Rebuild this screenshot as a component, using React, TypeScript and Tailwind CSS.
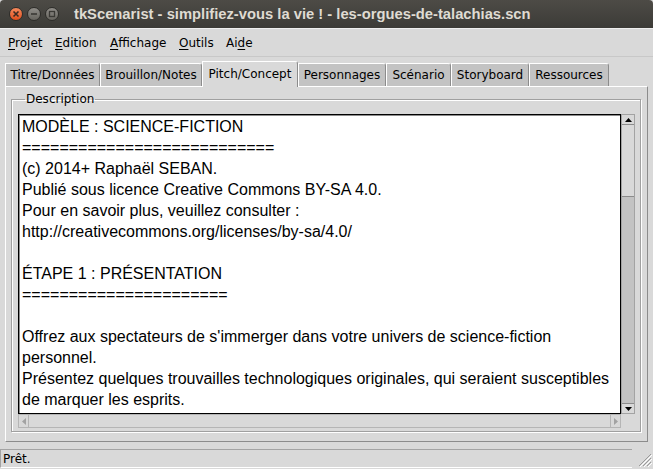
import React from 'react'

const menus = [
  { label: 'Projet', u: 0, w: 'w-[47px]' },
  { label: 'Edition', u: 0, w: 'w-[55px]' },
  { label: 'Affichage', u: 0, w: 'w-[69px]' },
  { label: 'Outils', u: 0, w: 'w-[47px]' },
  { label: 'Aide', u: 2, w: 'w-[40px]' },
]

const tabs = [
  { label: 'Titre/Données', w: 'w-[95px]' },
  { label: 'Brouillon/Notes', w: 'w-[102px]' },
  { label: 'Pitch/Concept', w: 'w-[96px]', active: true },
  { label: 'Personnages', w: 'w-[88px]' },
  { label: 'Scénario', w: 'w-[65px]' },
  { label: 'Storyboard', w: 'w-[78px]' },
  { label: 'Ressources', w: 'w-[80px]' },
]

const lines = [
  'MODÈLE : SCIENCE-FICTION',
  '===========================',
  '(c) 2014+ Raphaël SEBAN.',
  'Publié sous licence Creative Commons BY-SA 4.0.',
  'Pour en savoir plus, veuillez consulter :',
  'http://creativecommons.org/licenses/by-sa/4.0/',
  '',
  'ÉTAPE 1 : PRÉSENTATION',
  '======================',
  '',
  "Offrez aux spectateurs de s'immerger dans votre univers de science-fiction",
  'personnel.',
  'Présentez quelques trouvailles technologiques originales, qui seraient susceptibles',
  'de marquer les esprits.',
]

function Underlined ({ text, at }: { text: string, at: number }): React.ReactElement {
  return (
    <span>
      {text.slice(0, at)}
      <span className="underline underline-offset-[2px]">{text[at]}</span>
      {text.slice(at + 1)}
    </span>
  )
}

function WindowButtons (): React.ReactElement {
  return (
    <div className="flex items-center gap-[4px] pl-[9px]">
      <div className="w-[14px] h-[14px] rounded-full bg-gradient-to-b from-[#f58a5c] to-[#e04d18] border border-[#2e2d2a] flex items-center justify-center">
        <svg width="8" height="8" viewBox="0 0 8 8"><path d="M1.5 1.5 L6.5 6.5 M6.5 1.5 L1.5 6.5" stroke="#3a2a22" strokeWidth="1.6" /></svg>
      </div>
      <div className="w-[14px] h-[14px] rounded-full bg-gradient-to-b from-[#8f8d88] to-[#67655f] border border-[#2e2d2a] flex items-center justify-center">
        <svg width="8" height="8" viewBox="0 0 8 8"><path d="M1 4 L7 4" stroke="#3a3935" strokeWidth="1.6" /></svg>
      </div>
      <div className="w-[14px] h-[14px] rounded-full bg-gradient-to-b from-[#8f8d88] to-[#67655f] border border-[#2e2d2a] flex items-center justify-center">
        <svg width="8" height="8" viewBox="0 0 8 8"><rect x="1.5" y="1.5" width="5" height="5" fill="none" stroke="#3a3935" strokeWidth="1.3" /></svg>
      </div>
    </div>
  )
}

function Arrow ({ dir, color }: { dir: 'up' | 'down' | 'left' | 'right', color: string }): React.ReactElement {
  const d = {
    up: 'M0 4 L3.5 0 L7 4 Z',
    down: 'M0 0 L7 0 L3.5 4 Z',
    left: 'M4 0 L4 7 L0 3.5 Z',
    right: 'M0 0 L4 3.5 L0 7 Z',
  }[dir]
  const vertical = dir === 'up' || dir === 'down'
  return (
    <svg width={vertical ? 7 : 4} height={vertical ? 4 : 7} viewBox={vertical ? '0 0 7 4' : '0 0 4 7'}>
      <path d={d} fill={color} />
    </svg>
  )
}

export default function App (): React.ReactElement {
  return (
    <div className="w-[653px] h-[469px] bg-[#d9d9d9] flex flex-col overflow-hidden font-['DejaVu_Sans',sans-serif] text-[12px] text-black">
      {/* title bar */}
      <div className="h-[28px] shrink-0 flex items-center bg-gradient-to-b from-[#4d4b46] to-[#3c3b37] rounded-t-[4px]">
        <WindowButtons />
        <div className="ml-[15px] text-[#dfdbd2] font-bold text-[14.75px] font-['Liberation_Sans',sans-serif] leading-none">
          tkScenarist - simplifiez-vous la vie ! - les-orgues-de-talachias.scn
        </div>
      </div>

      {/* menu bar */}
      <div className="h-[29px] shrink-0 flex items-center pl-[2px] border-t border-[#eeeeee] border-b border-b-[#c8c8c8]">
        {menus.map(m => (
          <div key={m.label} className={`${m.w} pl-[6px] text-[12px]`}>
            <Underlined text={m.label} at={m.u} />
          </div>
        ))}
      </div>

      {/* notebook */}
      <div className="ml-[5px] mt-[4px] w-[643px] flex flex-col">
        <div className="flex items-end h-[25px]">
          {tabs.map(t => (
            <div
              key={t.label}
              className={t.active
                ? `${t.w} h-[26px] -mb-[1px] relative z-10 bg-[#d9d9d9] border-l border-t border-r border-l-white border-t-white border-r-[#8c8c8c] rounded-tr-[3px] flex items-center justify-center pb-[1px]`
                : `${t.w} h-[23px] bg-[#c3c3c3] border-l border-t border-r border-l-white border-t-white border-r-[#8c8c8c] rounded-tr-[3px] flex items-center justify-center`}
            >
              {t.label}
            </div>
          ))}
        </div>
        <div className="h-[356px] border border-t-white border-l-white border-r-[#8c8c8c] border-b-[#8c8c8c] pt-[5px] pl-[5px] pr-[6px]">
          <fieldset className="border border-[#a0a0a0] shadow-[inset_1px_1px_0_#ffffff,1px_1px_0_#ffffff] h-[340px] pt-[8px] pl-[6px]">
            <legend className="ml-[7px] px-[1px] leading-[14px]">Description</legend>
            <div className="grid grid-cols-[603px_14px] grid-rows-[300px_14px]">
              <div className="border border-black shadow-[inset_1px_1px_0_#8c8c8c] bg-white overflow-hidden pl-[3px] pt-[1px] font-['Liberation_Sans',sans-serif] text-[16px] leading-[21px] whitespace-pre">
                {lines.map((l, i) => (
                  <div key={i} className="h-[21px]">{l}</div>
                ))}
              </div>
              <div className="flex flex-col bg-[#c3c3c3] border border-[#a3a3a3]">
                <div className="h-[10px] shrink-0 bg-[#d9d9d9] border-b border-[#8c8c8c] flex items-center justify-center">
                  <Arrow dir="up" color="#000000" />
                </div>
                <div className="h-[72px] shrink-0 bg-[#d9d9d9] border-b border-[#8c8c8c]" />
                <div className="flex-1" />
                <div className="h-[10px] shrink-0 bg-[#d9d9d9] border-t border-[#8c8c8c] flex items-center justify-center">
                  <Arrow dir="down" color="#000000" />
                </div>
              </div>
              <div className="flex bg-[#d9d9d9] border border-[#b5b5b5]">
                <div className="w-[10px] shrink-0 border-r border-[#b5b5b5] flex items-center justify-center">
                  <Arrow dir="left" color="#a3a3a3" />
                </div>
                <div className="flex-1" />
                <div className="w-[10px] shrink-0 border-l border-[#b5b5b5] flex items-center justify-center">
                  <Arrow dir="right" color="#a3a3a3" />
                </div>
              </div>
              <div />
            </div>
          </fieldset>
        </div>
      </div>

      {/* status bar */}
      <div className="mt-[6px] h-[21px] flex items-start">
        <div className="mt-[1px] h-[19px] w-[632px] border-t border-l border-[#a3a3a3] border-b border-b-white pl-[2px] flex items-center">
          Prêt.
        </div>
        <div className="ml-auto mt-[3px] mr-[1px]">
          <svg width="16" height="16" viewBox="0 0 16 16">
            <path d="M15 3 L3 15 M15 7 L7 15 M15 11 L11 15" stroke="#9a9a9a" strokeWidth="1" />
            <path d="M16 4 L4 16 M16 8 L8 16 M16 12 L12 16" stroke="#ffffff" strokeWidth="1" />
          </svg>
        </div>
      </div>
    </div>
  )
}
